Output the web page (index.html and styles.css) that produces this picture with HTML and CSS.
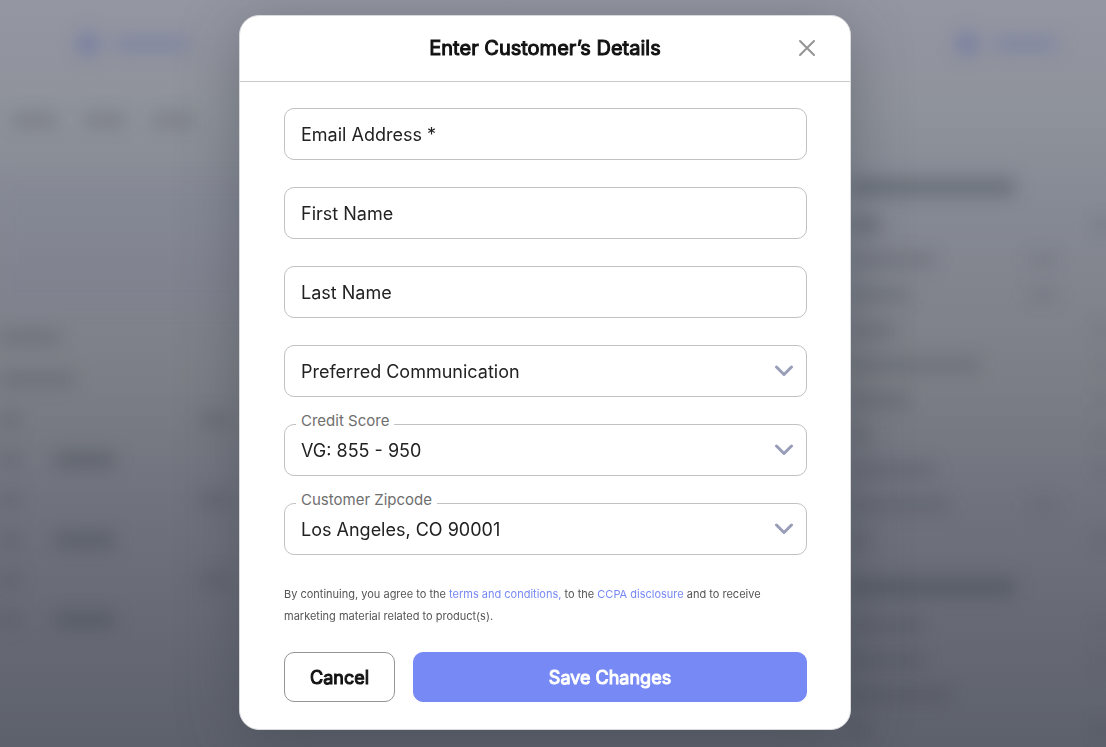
FILE: index.html
```
<!DOCTYPE html>
<html lang="en">
<head>
    <meta charset="UTF-8">
    <meta name="viewport" content="width=device-width, initial-scale=1">
    <title>Enter Customer’s Details</title>
    <link rel="stylesheet" href="styles.css">
</head>
<body>
<!-- blurred page behind the dialog -->
<div class="page" aria-hidden="true">
    <div class="page-top">
        <div class="brand"><i class="dot"></i><i class="bar blue w75"></i></div>
        <div class="brand"><i class="dot"></i><i class="bar blue w65"></i></div>
    </div>
    <div class="page-main">
        <div class="page-left">
            <div class="tabs"><i class="bar light w45"></i><i class="bar light w40"></i><i class="bar light w40"></i></div>
            <div class="banner"></div>
            <div class="line"><i class="bar light w60"></i></div>
            <div class="line"><i class="bar light w75"></i></div>
            <div class="cells"><i class="bar light w20"></i><i></i><i class="bar light w30"></i></div>
            <div class="cells"><i class="bar light w20"></i><i class="bar w60"></i></div>
            <div class="cells"><i class="bar light w20"></i><i></i><i class="bar light w30"></i></div>
            <div class="cells"><i class="bar light w20"></i><i class="bar w60"></i></div>
            <div class="cells"><i class="bar light w20"></i><i></i><i class="bar light w30"></i></div>
            <div class="cells"><i class="bar light w20"></i><i class="bar w60"></i></div>
        </div>
        <div class="page-right">
            <div class="row head"><i class="bar w165"></i></div>
            <div class="row"><i class="bar w30"></i><i class="bar edge"></i></div>
            <div class="row"><i class="bar light w85"></i><i class="bar faint w30"></i></div>
            <div class="row"><i class="bar light w60"></i><i class="bar faint w30"></i></div>
            <div class="row"><i class="bar light w45"></i><i class="bar light edge"></i></div>
            <div class="row"><i class="bar light w130"></i><i class="bar light edge"></i></div>
            <div class="row"><i class="bar light w60"></i><i class="bar light edge"></i></div>
            <div class="row"><i class="bar light w20"></i><i class="bar light edge"></i></div>
            <div class="row"><i class="bar light w85"></i><i class="bar light edge"></i></div>
            <div class="row"><i class="bar light w100"></i><i class="bar faint w30"></i></div>
            <div class="row"><i class="bar light w20"></i><i class="bar edge"></i></div>
            <div class="row head second"><i class="bar w165"></i></div>
            <div class="row"><i class="bar light w75"></i><i class="bar light edge"></i></div>
            <div class="row"><i class="bar light w75"></i><i class="bar light edge"></i></div>
            <div class="row"><i class="bar light w100"></i></div>
            <div class="row"><i class="bar light w20"></i><i class="bar edge"></i></div>
        </div>
    </div>
</div>

<div class="overlay">
    <div class="dialog" role="dialog" aria-modal="true" aria-labelledby="dialog-title">
        <div class="dialog-header">
            <h1 id="dialog-title">Enter Customer’s Details</h1>
            <button type="button" class="close" aria-label="Close">
                <svg width="18" height="18" viewBox="0 0 18 18"><path d="M2 2l14 14M16 2L2 16"/></svg>
            </button>
        </div>
        <form class="dialog-body">
            <div class="fields">
                <div class="field">
                    <input type="email" id="email" placeholder="Email Address *" aria-label="Email Address" required>
                </div>
                <div class="field">
                    <input type="text" id="first-name" placeholder="First Name" aria-label="First Name">
                </div>
                <div class="field">
                    <input type="text" id="last-name" placeholder="Last Name" aria-label="Last Name">
                </div>
                <div class="field">
                    <select id="communication" aria-label="Preferred Communication">
                        <option>Preferred Communication</option>
                    </select>
                    <svg class="chevron" width="20" height="12" viewBox="0 0 20 12"><path d="M2.5 2l7.5 7.5L17.5 2"/></svg>
                </div>
                <div class="field">
                    <label for="credit">Credit Score</label>
                    <select id="credit">
                        <option>VG: 855 - 950</option>
                    </select>
                    <svg class="chevron" width="20" height="12" viewBox="0 0 20 12"><path d="M2.5 2l7.5 7.5L17.5 2"/></svg>
                </div>
                <div class="field">
                    <label for="zipcode">Customer Zipcode</label>
                    <select id="zipcode">
                        <option>Los Angeles, CO 90001</option>
                    </select>
                    <svg class="chevron" width="20" height="12" viewBox="0 0 20 12"><path d="M2.5 2l7.5 7.5L17.5 2"/></svg>
                </div>
            </div>
            <p class="legal">By continuing, you agree to the <a href="#">terms and conditions,</a> to the <a href="#">CCPA disclosure</a> and to receive marketing material related to product(s).</p>
            <div class="actions">
                <button type="button" class="btn btn-cancel">Cancel</button>
                <button type="submit" class="btn btn-save">Save Changes</button>
            </div>
        </form>
    </div>
</div>
</body>
</html>
```
FILE: styles.css
```
*{
    box-sizing: border-box;
    margin: 0;
    padding: 0;
}
html,body{
    height: 100%;
}
body{
    font-family: Inter, "Liberation Sans", sans-serif;
    color: #222;
    background: linear-gradient(#9496a2 0%, #8f939b 14%, #868a94 27%, #7c7f87 50%, #70737d 67%, #5d616c 100%);
    overflow: hidden;
}

/* page behind */
.page{
    position: fixed;
    inset: 0;
    overflow: hidden;
    filter: blur(9px);
}
.page-top{
    display: flex;
    justify-content: space-between;
    align-items: center;
    height: 88px;
    padding: 0 48px 0 76px;
}
.brand{
    display: flex;
    align-items: center;
    gap: 14px;
}
.dot{
    width: 24px;
    height: 24px;
    border-radius: 50%;
    background: rgba(95,105,165,.5);
}
.bar{
    flex: none;
    height: 14px;
    background: rgba(50,58,66,.34);
}
.bar.light{
    background: rgba(50,58,66,.21);
}
.bar.faint{
    background: rgba(50,58,66,.12);
}
.bar.blue{
    background: rgba(95,105,165,.36);
}
.w20{width: 20px;}
.w30{width: 30px;}
.w40{width: 40px;}
.w45{width: 45px;}
.w60{width: 60px;}
.w65{width: 65px;}
.w75{width: 75px;}
.w85{width: 85px;}
.w100{width: 100px;}
.w130{width: 130px;}
.w165{width: 165px;}
.page-main{
    display: flex;
    justify-content: space-between;
}
.page-left,.page-right{
    width: 256px;
}
.tabs{
    display: flex;
    align-items: center;
    gap: 28px;
    height: 64px;
    padding-left: 12px;
}
.banner{
    height: 126px;
    margin: 28px 0 10px;
    background: rgba(120,125,155,.12);
}
.line{
    display: flex;
    align-items: center;
    height: 42px;
}
.cells{
    display: grid;
    grid-template-columns: 55px 145px 1fr;
    align-items: center;
    height: 40px;
}
.page-right{
    padding-top: 79px;
}
.row{
    display: flex;
    align-items: center;
    justify-content: space-between;
    height: 35px;
}
.row .faint{
    margin-right: 48px;
}
.row.head{
    height: 40px;
}
.row.head .bar{
    height: 18px;
}
.row.second{
    margin-top: 10px;
}
.edge{
    width: 8px;
}

/* dialog */
.overlay{
    position: relative;
    display: flex;
    align-items: center;
    justify-content: center;
    min-height: 100%;
    padding: 12px 16px 14px 0;
}
.dialog{
    width: 100%;
    max-width: 612px;
    background: #fff;
    border: 1px solid #d9dadd;
    border-radius: 20px;
    box-shadow: 0 12px 60px rgba(50,58,66,.38);
}
.dialog-header{
    display: grid;
    grid-template-columns: 24px 1fr 24px;
    align-items: center;
    height: 66px;
    padding: 0 31px 2px;
    border-bottom: 1px solid #c9c9c9;
}
/* regular letter widths, thickened with a stroke */
.dialog-header h1,.btn{
    font-weight: 400;
    -webkit-text-stroke: 1px currentColor;
}
.dialog-header h1{
    grid-column: 2;
    font-size: 20px;
    line-height: 24px;
    text-align: center;
    color: #111;
}
.close{
    display: flex;
    align-items: center;
    justify-content: center;
    width: 24px;
    height: 24px;
    border: 0;
    background: none;
    cursor: pointer;
}
.close svg{
    fill: none;
    stroke: #949494;
    stroke-width: 2;
    stroke-linecap: round;
}
.dialog-body{
    padding: 26px 43px 27px 44px;
}
.fields{
    display: grid;
    gap: 27px;
}
.field{
    position: relative;
    display: flex;
}
.field input,.field select{
    width: 100%;
    height: 52px;
    padding: 0 16px;
    border: 1px solid #c1c1c1;
    border-radius: 10px;
    background: #fff;
    font-family: inherit;
    font-size: 18px;
    color: #222;
    appearance: none;
    outline: none;
}
.field input::placeholder{
    color: #222;
    opacity: 1;
}
.field input:focus,.field select:focus{
    border-color: #7789f4;
}
.field label{
    position: absolute;
    left: 12px;
    top: -13px;
    padding: 0 5px;
    background: #fff;
    font-size: 15px;
    line-height: 20px;
    color: #6e6e6e;
}
.chevron{
    position: absolute;
    right: 13px;
    top: 20px;
    fill: none;
    stroke: #999eb8;
    stroke-width: 3;
    stroke-linecap: round;
    stroke-linejoin: round;
    pointer-events: none;
}
.legal{
    margin: 28px 0 25px;
    font-size: 11px;
    line-height: 22px;
    color: #555;
}
.legal a{
    color: #7789f4;
    text-decoration: none;
}
.actions{
    display: flex;
    gap: 18px;
}
.btn{
    height: 50px;
    border: 1px solid #7789f4;
    border-radius: 10px;
    font-family: inherit;
    font-size: 18px;
    cursor: pointer;
}
.btn-cancel{
    width: 111px;
    border-color: #949494;
    background: #fff;
    color: #111;
}
.btn-save{
    flex: 1;
    background: #7789f4;
    color: #fff;
}
```
